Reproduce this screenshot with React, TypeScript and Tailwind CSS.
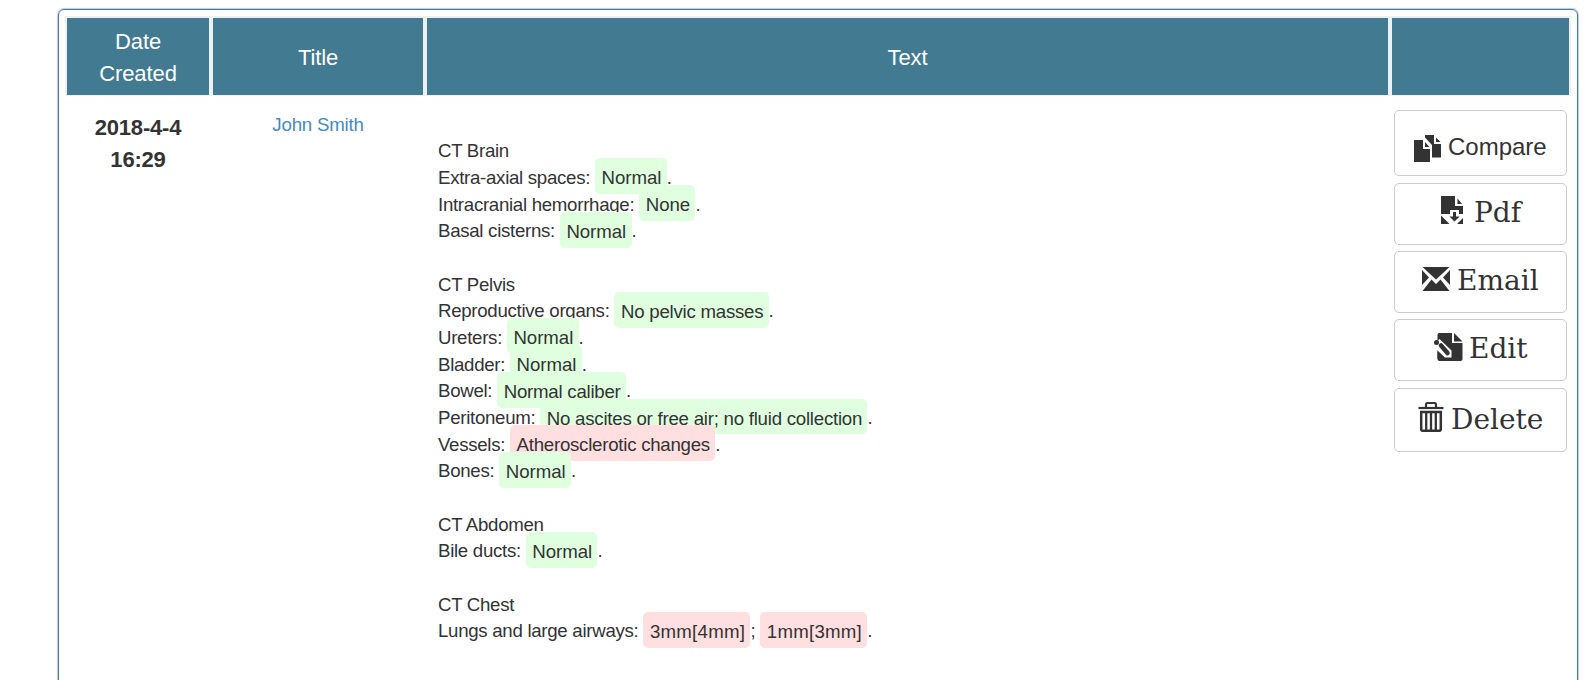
import type { ReactNode } from "react";

type Finding = { text: string; tone: string };
type Line = { label: string; findings?: Finding[] };

const OK_TIGHT = "bg-[#dfffdf] tracking-[-0.24px]";
const OK = "bg-[#dfffdf] tracking-[-0.05px]";
const BAD_TIGHT = "bg-[#ffdfe0] tracking-[-0.25px]";
const BAD_WIDE = "bg-[#ffdfe0] tracking-[0.25px]";

const f = (text: string, tone: string = OK): Finding => ({ text, tone });

const report: Line[][] = [
  [
    { label: "CT Brain" },
    { label: "Extra-axial spaces:", findings: [f("Normal")] },
    { label: "Intracranial hemorrhage:", findings: [f("None")] },
    { label: "Basal cisterns:", findings: [f("Normal")] },
  ],
  [
    { label: "CT Pelvis" },
    { label: "Reproductive organs:", findings: [f("No pelvic masses", OK_TIGHT)] },
    { label: "Ureters:", findings: [f("Normal")] },
    { label: "Bladder:", findings: [f("Normal")] },
    { label: "Bowel:", findings: [f("Normal caliber", OK_TIGHT)] },
    { label: "Peritoneum:", findings: [f("No ascites or free air; no fluid collection", OK_TIGHT)] },
    { label: "Vessels:", findings: [f("Atherosclerotic changes", BAD_TIGHT)] },
    { label: "Bones:", findings: [f("Normal")] },
  ],
  [{ label: "CT Abdomen" }, { label: "Bile ducts:", findings: [f("Normal")] }],
  [
    { label: "CT Chest" },
    { label: "Lungs and large airways:", findings: [f("3mm[4mm]", BAD_WIDE), f("1mm[3mm]", BAD_WIDE)] },
  ],
];

function ReportLine({ line }: { line: Line }) {
  return (
    <div className="tracking-[-0.29px]">
      {line.label}
      {line.findings?.map((item, i, all) => (
        <span key={item.text}>
          {" "}
          <span className={`rounded-[5px] pt-[8.6px] pr-[5.3px] pb-[6.4px] pl-[6.5px] ${item.tone}`}>{item.text}</span>
          {i < all.length - 1 ? ";" : "."}
        </span>
      ))}
    </div>
  );
}

function HeadCell({ children }: { children?: ReactNode }) {
  return (
    <div className="flex items-center justify-center border-2 border-b-1 border-[#ebf1f4] bg-[#417a91] pt-[2px] text-center text-[22px] leading-8 tracking-[-0.1px] text-white">
      {children}
    </div>
  );
}

function ActionButton({ className, children }: { className: string; children: ReactNode }) {
  return (
    <button
      type="button"
      className={`flex w-full items-start rounded-[5px] border border-[#ccc] bg-white text-left text-[#333] ${className}`}
    >
      {children}
    </button>
  );
}

function CompareIcon() {
  return (
    <svg className="mt-[24px] h-[27px] w-[27px] shrink-0" viewBox="0 0 27 27" fill="#333">
      <path d="M11 0H20V9H27V22.500H18V10L11 2.500Z" />
      <path d="M22 2.500L26.500 7H22Z" />
      <path d="M0 5H9V14H16V27H0Z" />
      <path d="M11 7L15.500 12H11Z" />
    </svg>
  );
}

function PdfIcon() {
  return (
    <svg className="mt-[12px] h-[28px] w-[22px] shrink-0" viewBox="0 0 22 28" fill="#333">
      <path d="M0 0H14V10H22V18H18V14H9V18H0Z" />
      <path d="M16.500 2.500L21 8H16.500Z" />
      <path d="M12 16H15V20.500H18.500L13.500 25.500L8.500 20.500H12Z" />
      <path d="M0 19.500L8.500 28H0ZM22 22V28H16Z" />
    </svg>
  );
}

function EmailIcon() {
  return (
    <svg className="mt-[15px] h-[24px] w-[28px] shrink-0" viewBox="0 0 28 24" fill="#333">
      <path d="M0.500 0H27.500L14 12.500Z" />
      <path d="M0 3L7 10.500L0 18ZM28 3V18L21 10.500Z" />
      <path d="M0.500 24L9.500 12.500L14 17L18.500 12.500L27.500 24Z" />
    </svg>
  );
}

function EditIcon() {
  return (
    <svg className="mt-[13px] h-[28px] w-[29px] shrink-0" viewBox="0 0 29 28" fill="#333">
      <path d="M5 0H18V10H28.500V26Q28.500 28 26.500 28H5.500Q3.500 28 3.500 26V2Q3.500 0 5 0Z" />
      <path d="M20 0L28.500 8.500H20Z" />
      <path d="M0 13L5.500 6L17.500 17.500V24.500H11L3 17Z" fill="#fff" />
      <path d="M3.500 18.500L10.500 25.500H3.500Z" />
      <path d="M7 12.500L13.500 20" stroke="#333" strokeWidth="4.500" strokeLinecap="round" />
      <circle cx="2.500" cy="9.500" r="2.500" />
    </svg>
  );
}

function TrashIcon() {
  return (
    <svg className="mt-[12px] h-[31px] w-[26px] shrink-0" viewBox="0 0 26 31" fill="none" stroke="#333">
      <path d="M0.500 7H25.500" strokeWidth="2.200" />
      <path d="M8 6V4Q8 2 9.500 2H16.500Q18 2 18 4V6" strokeWidth="2.200" />
      <path d="M3.200 11H22.800V28Q22.800 29.700 21.500 29.700H4.500Q3.200 29.700 3.200 28Z" strokeWidth="2.500" />
      <path d="M8.200 11V29M13 11V29M17.800 11V29" strokeWidth="2.300" />
    </svg>
  );
}

export default function App() {
  return (
    <div className="h-[680px] overflow-hidden bg-white pt-[9px] pl-[58px] font-['Liberation_Sans',sans-serif] text-[#333]">
      <div className="h-[700px] w-[1520px] rounded-[6px] border border-[#3f7fae] px-[6px] pt-[6px] shadow-[0_0_1px_1px_rgba(0,0,0,0.22)]">
        <div className="grid h-[80px] grid-cols-[146px_214px_965px_181px]">
          <HeadCell>
            Date
            <br />
            Created
          </HeadCell>
          <HeadCell>Title</HeadCell>
          <HeadCell>Text</HeadCell>
          <HeadCell />
        </div>
        <div className="grid grid-cols-[146px_214px_965px_181px]">
          <div className="pt-[16px] text-center text-[22px] leading-8 font-bold tracking-[-0.2px]">
            2018-4-4
            <br />
            16:29
          </div>
          <div className="pt-[16px] text-center text-[18.667px] leading-[26.667px] tracking-[-0.2px] text-[#428bca]">
            John Smith
          </div>
          <div className="space-y-[26.667px] pt-[42.4px] pl-[13px] text-[18.667px] leading-[26.667px]">
            {report.map((section) => (
              <div key={section[0].label}>
                {section.map((line) => (
                  <ReportLine key={line.label} line={line} />
                ))}
              </div>
            ))}
          </div>
          <div className="flex flex-col pt-[14px] pr-[4px] pl-[4px] font-['DejaVu_Serif',serif] text-[28px] leading-[40px]">
            <ActionButton className="h-[66px] pl-[19px]">
              <CompareIcon />
              <span className="mt-[16px] ml-[7px] font-['Liberation_Sans',sans-serif] text-[24px]">Compare</span>
            </ActionButton>
            <ActionButton className="mt-[7px] h-[62px] pl-[46px]">
              <PdfIcon />
              <span className="mt-[9px] ml-[11px]">Pdf</span>
            </ActionButton>
            <ActionButton className="mt-[6px] h-[62px] pl-[27px]">
              <EmailIcon />
              <span className="mt-[9px] ml-[7px]">Email</span>
            </ActionButton>
            <ActionButton className="mt-[6px] h-[62px] pl-[39px]">
              <EditIcon />
              <span className="mt-[9px] ml-[6px]">Edit</span>
            </ActionButton>
            <ActionButton className="mt-[7px] h-[64px] pl-[23px]">
              <TrashIcon />
              <span className="mt-[11px] ml-[7px]">Delete</span>
            </ActionButton>
          </div>
        </div>
      </div>
    </div>
  );
}
